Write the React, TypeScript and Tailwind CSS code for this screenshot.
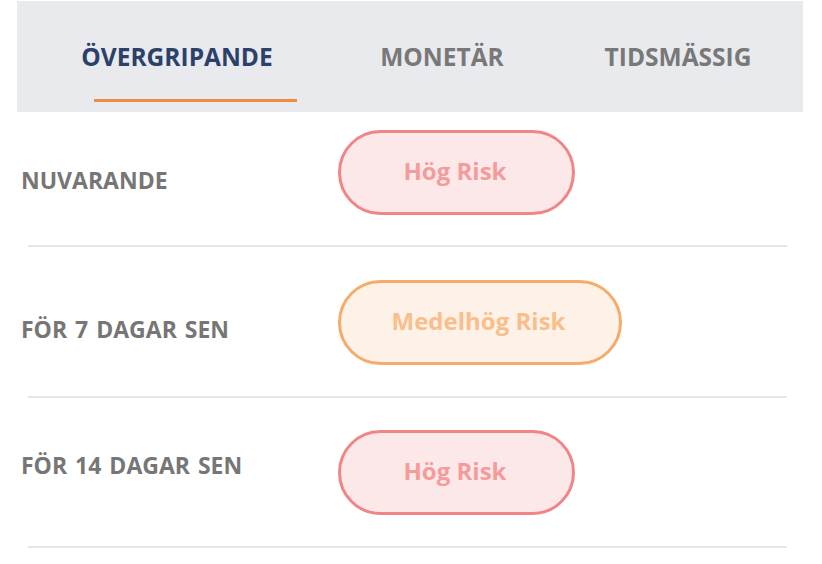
const tabs = [
  { label: "ÖVERGRIPANDE", active: true },
  { label: "MONETÄR", active: false },
  { label: "TIDSMÄSSIG", active: false },
]

type Level = "high" | "medium"

const rows: { label: string; level: Level; text: string; rowH: string; pillMt: string; labelMt: string; pillW: string }[] = [
  { label: "NUVARANDE", level: "high", text: "Hög Risk", rowH: "h-[133px]", pillMt: "mt-[18px]", labelMt: "mt-[53px]", pillW: "w-[237px]" },
  { label: "FÖR 7 DAGAR SEN", level: "medium", text: "Medelhög Risk", rowH: "h-[149px]", pillMt: "mt-[33px]", labelMt: "mt-[67px]", pillW: "w-[284px]" },
  { label: "FÖR 14 DAGAR SEN", level: "high", text: "Hög Risk", rowH: "h-[148px]", pillMt: "mt-[32px]", labelMt: "mt-[52px]", pillW: "w-[237px]" },
]

function RiskPill({ level, text, width }: { level: Level; text: string; width: string }) {
  const tone =
    level === "high"
      ? "border-[#f08585] bg-[#fde8e9] text-[#f49b9b]"
      : "border-[#f7ab6a] bg-[#fef1e7] text-[#f8bf8c]"
  return (
    <div
      className={`flex h-[85px] ${width} items-center justify-center rounded-full border-[3px] ${tone} pb-[3px] pr-[3px] text-[24px] font-bold`}
    >
      {text}
    </div>
  )
}

export default function App() {
  return (
    <div className="h-[564px] w-[822px] bg-white font-['Open_Sans',sans-serif]">
      {/* Tab bar */}
      <div className="ml-[17px] mt-px flex h-[111px] w-[786px] flex-col bg-[#e9eaee]">
        <div className="mt-[40px] flex h-[32px] items-center">
          {tabs.map((tab, i) => (
            <div
              key={tab.label}
              className={`${i === 0 ? "ml-[50px]" : i === 1 ? "ml-[45px]" : "ml-[16px]"} w-[220px] text-center text-[24.5px] leading-none font-bold ${
                tab.active ? "text-[#2b4169]" : "text-[#787878]"
              }`}
            >
              {tab.label}
            </div>
          ))}
        </div>
        <div className="ml-[77px] mt-[26px] h-[3px] w-[203px] bg-[#ef8c43]" />
      </div>

      {/* Risk rows */}
      {rows.map((row) => (
        <div key={row.label}>
          <div className={`flex ${row.rowH} items-start pl-[21px]`}>
            <div className={`${row.labelMt} w-[317px] text-[23px] leading-[30px] font-bold [word-spacing:2px] text-[#767676]`}>
              {row.label}
            </div>
            <div className={row.pillMt}>
              <RiskPill level={row.level} text={row.text} width={row.pillW} />
            </div>
          </div>
          <div className="ml-[28px] h-[2px] w-[759px] bg-[#e6e6e6]" />
        </div>
      ))}
    </div>
  )
}
